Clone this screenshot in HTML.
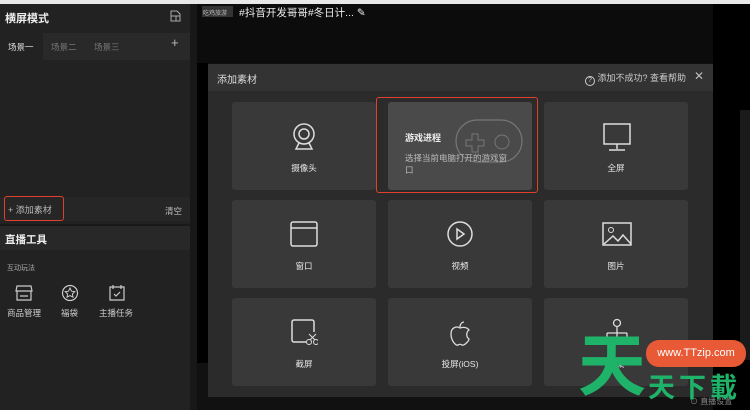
<!DOCTYPE html>
<html><head><meta charset="utf-8"><style>
*{margin:0;padding:0;box-sizing:border-box}
body{width:750px;height:410px;background:#111;font-family:"Liberation Sans","Noto Sans CJK SC",sans-serif;color:#ddd;position:relative;overflow:hidden;font-size:9px}
.a{position:absolute}
.card{position:absolute;width:144px;height:88px;background:#393939;border-radius:3px;text-align:center;color:#e8e8e8;font-size:8.5px}
.card svg{position:absolute;left:58px;top:20px}
.card span{position:absolute;left:0;right:0;top:60px}
</style></head><body>
<div class="a" style="left:0;top:0;width:750px;height:4px;background:#e8e8e8"></div>
<div class="a" style="left:0;top:4px;width:190px;height:406px;background:#222"></div>
<div class="a" style="left:5px;top:10px;font-size:11px;font-weight:bold;color:#eee">横屏模式</div>
<svg class="a" style="left:170px;top:10px" width="11" height="12"><path d="M1 1h6l3 3v7H1z M1 6h9 M6 6v5" fill="none" stroke="#aaa" stroke-width="1"/></svg>
<div class="a" style="left:0;top:33px;width:190px;height:27px;background:#292929"></div>
<div class="a" style="left:0;top:33px;width:43px;height:27px;background:#222"></div>
<div class="a" style="left:8px;top:41px;font-size:8.5px;color:#ddd">场景一</div>
<div class="a" style="left:51px;top:41px;font-size:8.5px;color:#777">场景二</div>
<div class="a" style="left:94px;top:41px;font-size:8.5px;color:#777">场景三</div>
<div class="a" style="left:171px;top:35px;font-size:13px;color:#bbb">+</div>
<div class="a" style="left:0;top:197px;width:190px;height:24px;background:#262626"></div>
<div class="a" style="left:4px;top:196px;width:60px;height:25px;border:1.5px solid #e0412c;border-radius:3px"></div>
<div class="a" style="left:8px;top:203px;font-size:9px;color:#bbb">+ 添加素材</div>
<div class="a" style="left:165px;top:205px;font-size:8.5px;color:#bbb">清空</div>
<div class="a" style="left:0;top:224px;width:190px;height:2px;background:#191919"></div>
<div class="a" style="left:0;top:226px;width:190px;height:24px;background:#282828"></div>
<div class="a" style="left:5px;top:232px;font-size:10.5px;font-weight:bold;color:#eee">直播工具</div>
<div class="a" style="left:7px;top:263px;font-size:7px;color:#aaa">互动玩法</div>
<svg class="a" style="left:15px;top:284px" width="18" height="18"><path d="M2 2h14l1 5H1z M2 7v9h14V7 M5 12h8" fill="none" stroke="#ccc" stroke-width="1.2"/></svg>
<svg class="a" style="left:61px;top:284px" width="18" height="18"><circle cx="9" cy="9" r="7.5" fill="none" stroke="#ccc" stroke-width="1.2"/><path d="M9 4l1.5 3.2 3.3.4-2.4 2.3.6 3.3L9 11.6 6 13.2l.6-3.3L4.2 7.6l3.3-.4z" fill="none" stroke="#ccc" stroke-width="1"/></svg>
<svg class="a" style="left:108px;top:284px" width="18" height="18"><path d="M2 3h14v13H2z M5 1v4 M13 1v4 M6 10l2 2 4-4" fill="none" stroke="#ccc" stroke-width="1.2"/></svg>
<div class="a" style="left:7px;top:307px;font-size:8.5px;color:#ccc">商品管理</div>
<div class="a" style="left:61px;top:307px;font-size:8.5px;color:#ccc">福袋</div>
<div class="a" style="left:99px;top:307px;font-size:8.5px;color:#ccc">主播任务</div>
<div class="a" style="left:190px;top:4px;width:7px;height:406px;background:#181818"></div>
<div class="a" style="left:197px;top:4px;width:553px;height:59px;background:#0c0c0c"></div>
<div class="a" style="left:202px;top:6px;width:31px;height:11px;background:#333;font-size:6px;color:#bbb;padding:2px 1px">吃鸡旅游</div>
<div class="a" style="left:239px;top:5px;font-size:10.5px;color:#eee">#抖音开发哥哥#冬日计... ✎</div>
<div class="a" style="left:197px;top:63px;width:11px;height:300px;background:#000"></div>
<div class="a" style="left:713px;top:4px;width:37px;height:406px;background:#000"></div>
<div class="a" style="left:740px;top:110px;width:10px;height:250px;background:#1a1a1a"></div>
<div class="a" style="left:208px;top:64px;width:505px;height:333px;background:#2b2b2b"></div>
<div class="a" style="left:208px;top:64px;width:505px;height:27px;background:#333"></div>
<div class="a" style="left:217px;top:71px;font-size:10px;color:#ddd">添加素材</div>
<div class="a" style="left:585px;top:71px;font-size:9px;color:#ccc"><span style="display:inline-block;width:10px;height:10px;border:1px solid #ccc;border-radius:50%;font-size:7px;text-align:center;line-height:8px;vertical-align:-1px">?</span> 添加不成功? 查看帮助</div>
<div class="a" style="left:694px;top:69px;font-size:12px;color:#bbb">✕</div>
<div class="card" style="left:232px;top:102px"><svg width="28" height="32"><circle cx="14" cy="12" r="10" fill="none" stroke="#ddd" stroke-width="1.5"/><circle cx="14" cy="12" r="5" fill="none" stroke="#ddd" stroke-width="1.5"/><path d="M9 21l-3 6h16l-3-6" fill="none" stroke="#ddd" stroke-width="1.5"/></svg><span>摄像头</span></div>
<div class="card" style="left:388px;top:102px;background:#4a4a4a;text-align:left">
<svg style="left:66px;top:16px" width="72" height="48"><rect x="2" y="2" width="66" height="42" rx="21" fill="none" stroke="#777" stroke-width="1.2"/><path d="M18 16h6v6h6v6h-6v6h-6v-6h-6v-6h6z" fill="none" stroke="#777"/><circle cx="48" cy="24" r="7" fill="none" stroke="#777"/></svg>
<div class="a" style="left:17px;top:29px;font-size:9px;color:#eee;font-weight:bold">游戏进程</div>
<div class="a" style="left:17px;top:50px;font-size:8.5px;color:#bbb;width:108px;line-height:12px">选择当前电脑打开的游戏窗口</div></div>
<div class="a" style="left:376px;top:97px;width:162px;height:96px;border:1.5px solid #e0412c;border-radius:3px"></div>
<div class="card" style="left:544px;top:102px"><svg width="30" height="30"><rect x="2" y="2" width="26" height="20" fill="none" stroke="#ddd" stroke-width="1.5"/><path d="M15 22v5 M7 28h16" stroke="#ddd" stroke-width="1.5"/></svg><span>全屏</span></div>
<div class="card" style="left:232px;top:200px"><svg width="28" height="28"><rect x="1" y="2" width="26" height="24" rx="2" fill="none" stroke="#ddd" stroke-width="1.5"/><path d="M1 8h26" stroke="#ddd" stroke-width="1.5"/></svg><span>窗口</span></div>
<div class="card" style="left:388px;top:200px"><svg width="28" height="28"><circle cx="14" cy="14" r="12" fill="none" stroke="#ddd" stroke-width="1.5"/><path d="M11 9l7 5-7 5z" fill="none" stroke="#ddd" stroke-width="1.5"/></svg><span>视频</span></div>
<div class="card" style="left:544px;top:200px"><svg width="30" height="28"><rect x="1" y="3" width="28" height="22" fill="none" stroke="#ddd" stroke-width="1.5"/><circle cx="9" cy="10" r="2.5" fill="none" stroke="#ddd"/><path d="M2 24l9-8 5 5 5-6 8 9" fill="none" stroke="#ddd" stroke-width="1.5"/></svg><span>图片</span></div>
<div class="card" style="left:232px;top:298px"><svg width="28" height="28"><path d="M16 24H4a2 2 0 0 1-2-2V4a2 2 0 0 1 2-2h18a2 2 0 0 1 2 2v10" fill="none" stroke="#ddd" stroke-width="1.5"/><circle cx="19" cy="24" r="2.5" fill="none" stroke="#ddd"/><circle cx="26" cy="24" r="2.5" fill="none" stroke="#ddd"/><path d="M19 16l6 6 M26 16l-6 6" stroke="#ddd"/></svg><span>截屏</span></div>
<div class="card" style="left:388px;top:298px"><svg width="28" height="30"><path d="M14 10c-3-2-9-1-9 6s5 12 7 11c2-1 2-1 4 0s7-4 7-6c-3-2-3-7 0-9-2-3-6-3-9-2z M14 9c0-3 2-5 4-5" fill="none" stroke="#ddd" stroke-width="1.3"/></svg><span>投屏(iOS)</span></div>
<div class="card" style="left:544px;top:298px"><svg width="30" height="30"><circle cx="15" cy="5" r="3.5" fill="none" stroke="#ddd" stroke-width="1.3"/><path d="M15 9v6 M5 15h20 M5 15v5 M15 15v5 M25 15v5" stroke="#ddd" stroke-width="1.3"/></svg><span>采集</span></div>
<div class="a" style="left:690px;top:396px;font-size:8px;color:#888">⊙ 直播设置</div>
<div class="a" style="left:578px;top:333px;font-size:68px;font-weight:bold;color:#1fb36a;line-height:1">天</div>
<div class="a" style="left:646px;top:340px;width:100px;height:27px;border-radius:13px;background:#e85a35;color:#fff;font-size:11px;text-align:center;line-height:27px">www.TTzip.com</div>
<div class="a" style="left:648px;top:375px;font-size:27px;font-weight:bold;color:#1fb36a;line-height:1;letter-spacing:4px">天下載</div>
</body></html>
